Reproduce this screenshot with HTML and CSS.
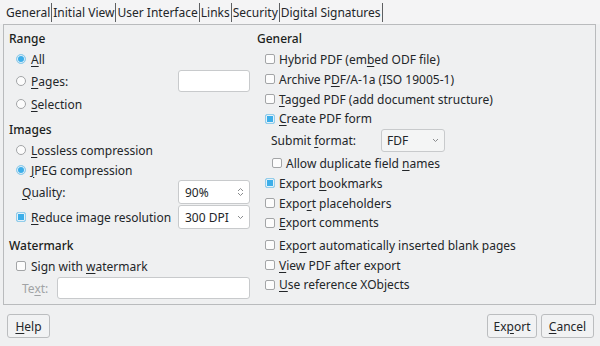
FILE: index.html
```html
<!DOCTYPE html>
<html lang="en">
<head>
    <title>PDF Options</title>
    <link rel="stylesheet" href="styles.css">
</head>
<body>

    <div class="tabs">
        <span class="tab">General</span>
        <span class="tab">Initial View</span>
        <span class="tab">User Interface</span>
        <span class="tab">Links</span>
        <span class="tab">Security</span>
        <span class="tab">Digital Signatures</span>
    </div>

    <div class="panel">
        <div class="col left">
            <div class="heading">Range</div>
            <div class="row"><span class="radio on"></span><span><u>A</u>ll</span></div>
            <div class="row h24"><span class="radio"></span><span><u>P</u>ages:</span><span class="field pages"></span></div>
            <div class="row h22"><span class="radio"></span><span><u>S</u>election</span></div>

            <div class="heading gap5">Images</div>
            <div class="row"><span class="radio"></span><span><u>L</u>ossless compression</span></div>
            <div class="row"><span class="radio on"></span><span><u>J</u>PEG compression</span></div>
            <div class="row h24"><span class="label"><u>Q</u>uality:</span>
                <span class="field spin">90%
                    <svg width="7" height="10" viewBox="0 0 7 10"><path d="M1 4 L3.5 1.5 L6 4 M1 6 L3.5 8.5 L6 6" fill="none" stroke="#8a8c8e" stroke-width="1"/></svg>
                </span>
            </div>
            <div class="row h24 gap1"><span class="check on"></span><span><u>R</u>educe image resolution</span>
                <span class="field combo">300 DPI
                    <svg width="7" height="5" viewBox="0 0 7 5"><path d="M1 1 L3.5 3.5 L6 1" fill="none" stroke="#8a8c8e" stroke-width="1"/></svg>
                </span>
            </div>

            <div class="heading gap7">Watermark</div>
            <div class="row"><span class="check"></span><span>Sign with <u>w</u>atermark</span></div>
            <div class="row h22 gap1"><span class="label off">Te<u>x</u>t:</span><span class="field text"></span></div>
        </div>

        <div class="col right">
            <div class="heading">General</div>
            <div class="row"><span class="check"></span><span>Hybrid PDF (em<u>b</u>ed ODF file)</span></div>
            <div class="row"><span class="check"></span><span>Archive P<u>D</u>F/A-1a (ISO 19005-1)</span></div>
            <div class="row"><span class="check"></span><span><u>T</u>agged PDF (add document structure)</span></div>
            <div class="row h19"><span class="check on"></span><span><u>C</u>reate PDF form</span></div>
            <div class="row h23 gap1"><span class="label sub">Submit <u>f</u>ormat:</span>
                <span class="field combo fdf">FDF
                    <svg width="7" height="5" viewBox="0 0 7 5"><path d="M1 1 L3.5 3.5 L6 1" fill="none" stroke="#8a8c8e" stroke-width="1"/></svg>
                </span>
            </div>
            <div class="row gap1 indent"><span class="check"></span><span>Allow duplicate field <u>n</u>ames</span></div>
            <div class="row"><span class="check on"></span><span>Export <u>b</u>ookmarks</span></div>
            <div class="row"><span class="check"></span><span>Expo<u>r</u>t placeholders</span></div>
            <div class="row h19"><span class="check"></span><span><u>E</u>xport comments</span></div>
            <div class="row gap3"><span class="check"></span><span>Exp<u>o</u>rt automatically inserted blank pages</span></div>
            <div class="row"><span class="check"></span><span><u>V</u>iew PDF after export</span></div>
            <div class="row h19"><span class="check"></span><span><u>U</u>se reference XObjects</span></div>
        </div>
    </div>

    <div class="buttons">
        <button type="button" class="help"><u>H</u>elp</button>
        <span class="spacer"></span>
        <button type="button" class="export">Ex<u>p</u>ort</button>
        <button type="button" class="cancel"><u>C</u>ancel</button>
    </div>

</body>
</html>
```

FILE: styles.css
```css
body {
    margin: 0;
    width: 600px;
    height: 346px;
    overflow: hidden;
    background-color: #eff0f1;
    font-family: "Noto Sans", sans-serif;
    font-size: 12px;
    color: #232629;
}

u {
    text-underline-offset: 2px;
}

.tabs {
    display: flex;
    align-items: center;
    height: 24px;
    padding-left: 5px;
    background-color: #f4f4f5;
}

.tab {
    padding: 0 1px;
    line-height: 19px;
    border-right: 1px solid #5e6062;
}

.panel {
    display: flex;
    box-sizing: border-box;
    height: 281px;
    margin: 0 4px 0 3px;
    padding: 4px 0 0 5px;
    border: 1px solid #b9bbbd;
}

.col {
    display: flex;
    flex-direction: column;
}

.left {
    width: 241px;
}

.right {
    flex: 1;
    margin-left: 7px;
}

.heading {
    height: 20px;
    line-height: 20px;
    font-weight: 500;
    color: #1b1e20;
}

.row {
    display: flex;
    align-items: center;
    height: 20px;
    padding-left: 7px;
    white-space: nowrap;
}

.right .row {
    padding-left: 8px;
}

.right .row.indent {
    padding-left: 15px;
}

.h19 { height: 19px; }
.h22 { height: 22px; }
.h23 { height: 23px; }
.h24 { height: 24px; }
.gap1 { margin-top: 1px; }
.gap3 { margin-top: 3px; }
.gap5 { margin-top: 5px; }
.gap7 { margin-top: 7px; }

.radio, .check {
    flex: none;
    box-sizing: border-box;
    width: 10px;
    height: 10px;
    margin-right: 5px;
    background-color: #fcfcfc;
    border: 1px solid #a3a5a7;
}

.right .check {
    margin-right: 4px;
}

.radio {
    border-radius: 50%;
}

.check {
    border-radius: 2px;
}

.radio.on, .check.on {
    background-color: #3daee9;
    border-color: #93cdea;
    box-shadow: inset 0 0 0 1px #e3f1f9;
}

.label {
    padding-left: 6px;
}

.label.off {
    color: #a1a3a5;
}

.right .label.sub {
    width: 110px;
}

.field {
    display: flex;
    align-items: center;
    box-sizing: border-box;
    background-color: #fff;
    border: 1px solid #c8cacc;
    border-radius: 3px;
}

.pages {
    margin-left: auto;
    width: 72px;
    height: 22px;
}

.spin, .combo {
    justify-content: space-between;
    margin-left: auto;
    width: 72px;
    height: 24px;
    padding: 0 5px 0 6px;
}

.combo.fdf {
    margin-left: 0;
    width: 64px;
    height: 23px;
    padding-left: 5px;
    background-color: #f4f5f5;
}

.text {
    margin-left: 9px;
    flex: 1;
    height: 22px;
}

.buttons {
    display: flex;
    gap: 4px;
    margin-top: 9px;
    padding: 0 6px 0 7px;
}

.spacer {
    flex: 1;
}

button {
    height: 24px;
    padding: 0;
    font-family: "Noto Sans", sans-serif;
    font-size: 12px;
    color: #232629;
    background-color: #f1f2f3;
    border: 1px solid #bbbdbf;
    border-radius: 3px;
}

.help {
    width: 43px;
}

.export {
    width: 50px;
}

.cancel {
    width: 53px;
}
```
